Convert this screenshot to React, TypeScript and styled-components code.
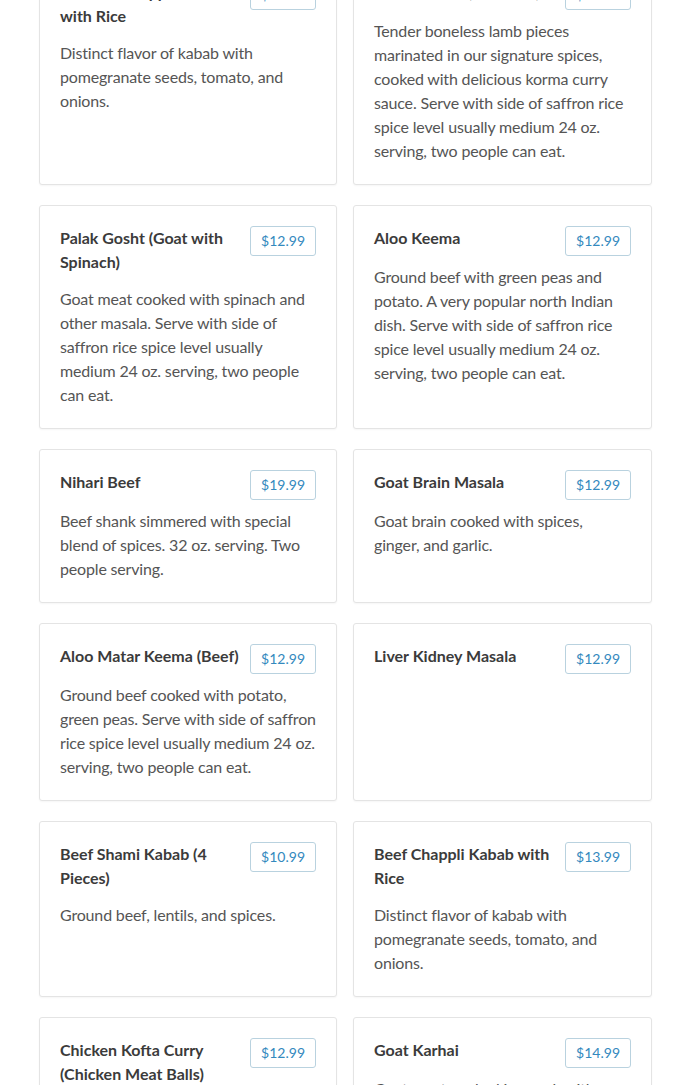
import React from 'react';
import styled, { createGlobalStyle } from 'styled-components';

const GlobalStyle = createGlobalStyle`
  html, body {
    margin: 0;
    padding: 0;
    background: #ffffff;
    font-family: Lato, 'Open Sans', Arial, sans-serif;
    overflow: hidden;
  }
`;

const Page = styled.div`
  width: 690px;
  height: 1085px;
  overflow: hidden;
`;

const MenuGrid = styled.div`
  display: grid;
  grid-template-columns: 298px 299px;
  column-gap: 16px;
  row-gap: 20px;
  margin: -41px 0 0 39px;
`;

const Card = styled.div`
  border: 1px solid #e4e4e4;
  border-radius: 3px;
  background: #fff;
  box-shadow: 0 1px 2px rgba(0, 0, 0, 0.04);
  padding: 20px 20px 21px;
`;

const CardHeader = styled.div`
  display: flex;
  align-items: flex-start;
  justify-content: space-between;
  gap: 10px;
`;

const Title = styled.h3`
  margin: 0 0 13px;
  flex: 1;
  font-size: 16px;
  line-height: 24px;
  font-weight: 700;
  color: #3b3b3b;
`;

const Price = styled.span`
  flex-shrink: 0;
  margin-bottom: 9px;
  padding: 4px 10px;
  font-size: 14px;
  line-height: 20px;
  color: #3389be;
  border: 1px solid #b9d2df;
  border-radius: 3px;
`;

const Description = styled.p`
  margin: 0;
  font-size: 16px;
  line-height: 24px;
  letter-spacing: -0.17px;
  color: #555555;
`;

const items = [
  {
    title: 'Chicken Chappli Kabab with Rice',
    price: '$12.99',
    desc: 'Distinct flavor of kabab with pomegranate seeds, tomato, and onions.',
  },
  {
    title: 'Lamb Korma (Boneless)',
    price: '$15.99',
    desc: 'Tender boneless lamb pieces marinated in our signature spices, cooked with delicious korma curry sauce. Serve with side of saffron rice spice level usually medium 24 oz. serving, two people can eat.',
  },
  {
    title: 'Palak Gosht (Goat with Spinach)',
    price: '$12.99',
    desc: 'Goat meat cooked with spinach and other masala. Serve with side of saffron rice spice level usually medium 24 oz. serving, two people can eat.',
  },
  {
    title: 'Aloo Keema',
    price: '$12.99',
    desc: 'Ground beef with green peas and potato. A very popular north Indian dish. Serve with side of saffron rice spice level usually medium 24 oz. serving, two people can eat.',
  },
  {
    title: 'Nihari Beef',
    price: '$19.99',
    desc: 'Beef shank simmered with special blend of spices. 32 oz. serving. Two people serving.',
  },
  {
    title: 'Goat Brain Masala',
    price: '$12.99',
    desc: 'Goat brain cooked with spices, ginger, and garlic.',
  },
  {
    title: 'Aloo Matar Keema (Beef)',
    price: '$12.99',
    desc: 'Ground beef cooked with potato, green peas. Serve with side of saffron rice spice level usually medium 24 oz. serving, two people can eat.',
  },
  {
    title: 'Liver Kidney Masala',
    price: '$12.99',
    desc: '',
  },
  {
    title: 'Beef Shami Kabab (4 Pieces)',
    price: '$10.99',
    desc: 'Ground beef, lentils, and spices.',
  },
  {
    title: 'Beef Chappli Kabab with Rice',
    price: '$13.99',
    desc: 'Distinct flavor of kabab with pomegranate seeds, tomato, and onions.',
  },
  {
    title: 'Chicken Kofta Curry (Chicken Meat Balls)',
    price: '$12.99',
    desc: 'Chicken meat balls cooked in a curry sauce with spices and herbs.',
  },
  {
    title: 'Goat Karhai',
    price: '$14.99',
    desc: 'Goat meat cooked in a wok with tomato, ginger, garlic and green chillies.',
  },
];

const App = () => {
  return (
    <Page>
      <GlobalStyle />
      <MenuGrid>
        {items.map(item => (
          <Card key={item.title}>
            <CardHeader>
              <Title>{item.title}</Title>
              <Price>{item.price}</Price>
            </CardHeader>
            {item.desc && <Description>{item.desc}</Description>}
          </Card>
        ))}
      </MenuGrid>
    </Page>
  );
};

export default App;
